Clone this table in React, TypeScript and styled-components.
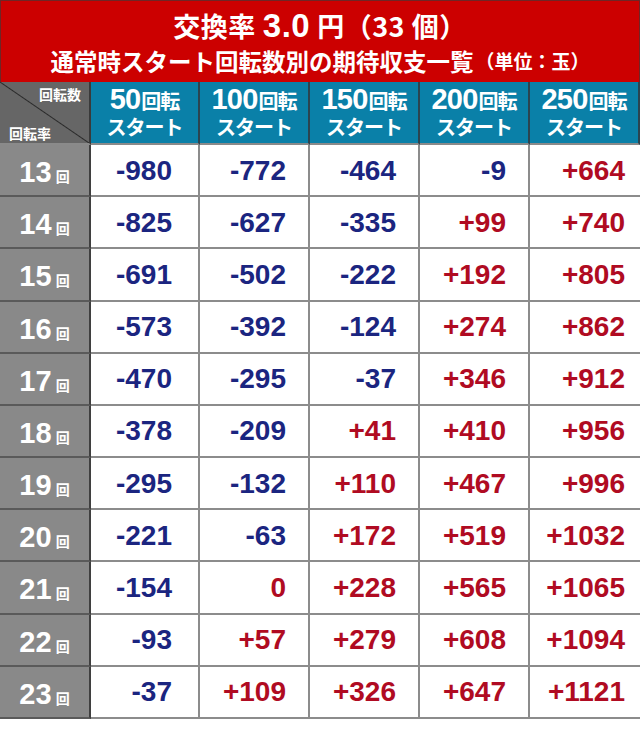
import React from "react";
import styled, { createGlobalStyle } from "styled-components";

const Global = createGlobalStyle`
  html, body { margin: 0; padding: 0; background: #fff; }
  body { font-family: "Liberation Sans", "Noto Sans CJK JP", Arial, sans-serif; }
  * { box-sizing: border-box; }
`;

const Page = styled.div`
  width: 640px;
  display: flex;
  flex-direction: column;
`;

const Title = styled.div`
  height: 82px;
  background: #cc0000;
  border: 1px solid #6e2626;
  border-bottom: none;
  color: #fff;
  display: flex;
  flex-direction: column;
  align-items: center;
  justify-content: flex-start;
  padding-top: 9px;
  font-weight: 700;
`;

const TitleMain = styled.div`
  font-family: "Noto Sans CJK JP", sans-serif;
  font-size: 27px;
  line-height: 32px;
  height: 32px;
  white-space: nowrap;
  letter-spacing: 0.5px;
  display: flex;
  align-items: center;
`;

const TitleNum = styled.span`
  font-family: "Liberation Sans", Arial, sans-serif;
  font-size: 33px;
  line-height: 32px;
  font-weight: 700;
  margin: 0 7px;
`;

const TitleSub = styled.div`
  font-family: "Noto Sans CJK JP", sans-serif;
  font-size: 23.5px;
  line-height: 30px;
  white-space: nowrap;
  margin-top: 4px;
  display: flex;
  align-items: center;
`;

const TitleUnit = styled.span`
  font-size: 19px;
  line-height: 30px;
  margin-left: 2px;
`;

const Table = styled.div`
  display: grid;
  grid-template-columns: 91px 109px 110px 110px 110px 110px;
  grid-template-rows: 63px repeat(11, 52.18px);
`;

const Corner = styled.div`
  background: #666666 linear-gradient(
      to top right,
      transparent calc(50% - 1px),
      #2a2a2a 50%,
      transparent calc(50% + 1px)
    );
  border-right: 2px solid #3a3a3a;
  border-bottom: 2px solid #8a8a8a;
  color: #fff;
  font-family: "Noto Sans CJK JP", sans-serif;
  font-weight: 700;
  font-size: 14px;
  display: flex;
  flex-direction: column;
  justify-content: space-between;
  padding: 3px 8px 1px 9px;
`;

const CornerTop = styled.div`
  align-self: flex-end;
  line-height: 18px;
`;

const CornerBottom = styled.div`
  align-self: flex-start;
  line-height: 18px;
`;

const HeadCell = styled.div`
  background: #0a80a8;
  border-right: 2px solid #2b4450;
  border-bottom: 2px solid #8a8a8a;
  color: #fff;
  font-weight: 700;
  display: flex;
  flex-direction: column;
  align-items: center;
  justify-content: center;
  padding-bottom: 2px;
  &:last-child {
    border-right: none;
  }
`;

const HeadLine = styled.div`
  display: flex;
  align-items: center;
  height: 30px;
  white-space: nowrap;
`;

const HeadNum = styled.span`
  font-family: "Liberation Sans", Arial, sans-serif;
  font-size: 29px;
  line-height: 30px;
  letter-spacing: -0.8px;
`;

const HeadJa = styled.span`
  font-family: "Noto Sans CJK JP", sans-serif;
  font-size: 20px;
  line-height: 24px;
  letter-spacing: -1px;
  margin: 3px 0 0 1px;
`;

const HeadSub = styled.div`
  font-family: "Noto Sans CJK JP", sans-serif;
  font-size: 20px;
  line-height: 24px;
  height: 24px;
  letter-spacing: -1px;
  white-space: nowrap;
  margin-top: 1px;
`;

const Label = styled.div`
  background: #898989;
  border-right: 2px solid #3f3f3f;
  border-bottom: 2px solid #5a5a5a;
  color: #fff;
  font-weight: 700;
  display: flex;
  align-items: baseline;
  justify-content: center;
  padding-top: 12px;
`;

const LabelNum = styled.span`
  font-family: "Liberation Sans", Arial, sans-serif;
  font-size: 29px;
  line-height: 30px;
`;

const LabelUnit = styled.span`
  font-family: "Noto Sans CJK JP", sans-serif;
  font-size: 14px;
  margin-left: 4px;
`;

const Cell = styled.div<{ $pr: number; $pos: boolean }>`
  background: #fff;
  border-right: 2px solid #8c8c8c;
  border-bottom: 2px solid #8c8c8c;
  display: flex;
  align-items: center;
  justify-content: flex-end;
  padding-right: ${(p) => p.$pr}px;
  padding-top: 1px;
  font-family: "Liberation Sans", Arial, sans-serif;
  font-weight: 700;
  font-size: 28px;
  color: ${(p) => (p.$pos ? "#b00b22" : "#1b2580")};
  &:nth-child(6n) {
    border-right: none;
  }
`;

const heads = ["50", "100", "150", "200", "250"];
const padding = [26, 22, 22, 22, 15];

const rows: [number, string[]][] = [
  [13, ["-980", "-772", "-464", "-9", "+664"]],
  [14, ["-825", "-627", "-335", "+99", "+740"]],
  [15, ["-691", "-502", "-222", "+192", "+805"]],
  [16, ["-573", "-392", "-124", "+274", "+862"]],
  [17, ["-470", "-295", "-37", "+346", "+912"]],
  [18, ["-378", "-209", "+41", "+410", "+956"]],
  [19, ["-295", "-132", "+110", "+467", "+996"]],
  [20, ["-221", "-63", "+172", "+519", "+1032"]],
  [21, ["-154", "0", "+228", "+565", "+1065"]],
  [22, ["-93", "+57", "+279", "+608", "+1094"]],
  [23, ["-37", "+109", "+326", "+647", "+1121"]],
];

export default function App() {
  return (
    <Page>
      <Global />
      <Title>
        <TitleMain>
          交換率<TitleNum>3.0</TitleNum>円（33 個）
        </TitleMain>
        <TitleSub>
          通常時スタート回転数別の期待収支一覧<TitleUnit>（単位：玉）</TitleUnit>
        </TitleSub>
      </Title>
      <Table>
        <Corner>
          <CornerTop>回転数</CornerTop>
          <CornerBottom>回転率</CornerBottom>
        </Corner>
        {heads.map((h) => (
          <HeadCell key={h}>
            <HeadLine>
              <HeadNum>{h}</HeadNum>
              <HeadJa>回転</HeadJa>
            </HeadLine>
            <HeadSub>スタート</HeadSub>
          </HeadCell>
        ))}
        {rows.map(([r, vals]) => (
          <React.Fragment key={r}>
            <Label>
              <LabelNum>{r}</LabelNum>
              <LabelUnit>回</LabelUnit>
            </Label>
            {vals.map((v, i) => (
              <Cell key={i} $pr={padding[i]} $pos={v.startsWith("+") || v === "0"}>
                {v}
              </Cell>
            ))}
          </React.Fragment>
        ))}
      </Table>
    </Page>
  );
}
